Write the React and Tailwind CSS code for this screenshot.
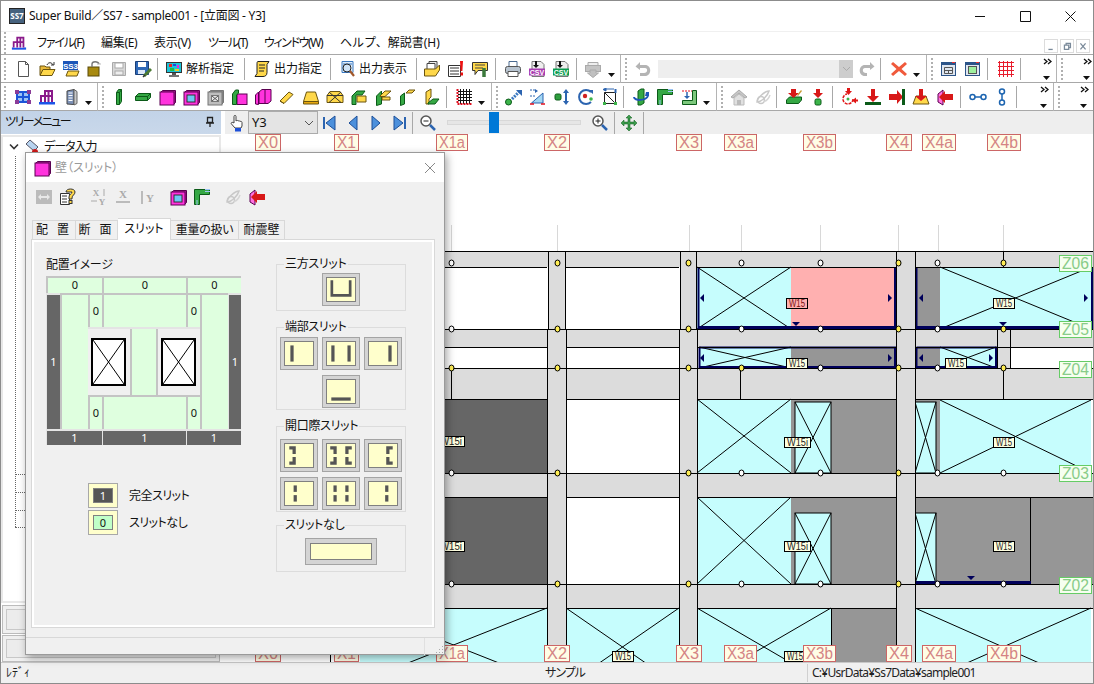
import React from 'react';

const MC = '#ff33dd';
const MD = '#5a0050';
const GR = '#35a844';
const GD = '#0b5a18';
const YL = '#ffd84a';
const YD = '#6a5410';

// toolbar icons, all on an 18x18 box
const icons = {
  new: <><path d="M4.5 1.5h7l3 3v12h-10z" fill="#fff" stroke="#555" /><path d="M11.5 1.5v3h3" fill="none" stroke="#555" /></>,
  open: <><path d="M2 15V6h5l1 1h4v3" fill="#e8b93a" stroke={YD} /><path d="M2 15.5l3-6h12l-3 6z" fill={YL} stroke={YD} /><path d="M9 5c1-3 5-3 6 0" fill="none" stroke="#333" /><path d="M13 5h3V2" fill="none" stroke="#333" /></>,
  ss3: <><path d="M4 16l2-5h11l-2 5z" fill={YL} stroke={YD} /><rect x="1" y="1" width="15" height="9" fill="#1c55b8" /><text x="8.5" y="8.5" textAnchor="middle" fontSize="8" fontWeight="700" fill="#fff" fontFamily="Liberation Sans">SS3</text></>,
  unlock: <><rect x="2" y="7" width="11" height="9" fill="#a88a10" stroke="#5a4a08" /><path d="M6 7V4c0-3 6-3 7 0" fill="none" stroke="#777" strokeWidth="1.4" /><path d="M11 4h4" stroke="#bbb" /></>,
  saveGray: <><path d="M2.5 2.5h13v13h-13z" fill="#d8d8d8" stroke="#aaa" /><rect x="5" y="3" width="8" height="5" fill="#fff" stroke="#aaa" /><rect x="5" y="11" width="8" height="4" fill="#eee" stroke="#aaa" /></>,
  saveEdit: <><path d="M1.5 1.5h13v13h-13z" fill="#2f69b8" stroke="#1a3f78" /><rect x="4" y="2" width="8" height="5" fill="#fff" /><rect x="4" y="10" width="7" height="4" fill="#dce8f8" /><path d="M10 16l7-7" stroke="#4c7a34" strokeWidth="3" /><path d="M9 17l2-2" stroke="#333" strokeWidth="1.5" /></>,
  monitor: <><rect x="1.5" y="2.5" width="15" height="10" fill="#1dc5d8" stroke="#333" /><rect x="4" y="4" width="3" height="3" fill="#e22" /><rect x="8" y="4" width="3" height="2" fill="#24d" /><rect x="12" y="5" width="2" height="3" fill="#e2d" /><rect x="5" y="8" width="4" height="3" fill="#2b4" /><rect x="10" y="9" width="4" height="2" fill="#ec2" /><path d="M7 13h4v2H7z" fill="#555" /><path d="M4 16h10" stroke="#444" strokeWidth="1.5" /></>,
  scroll: <><path d="M5 1.5h11l-2 3v8c0 3-2 4-4 4H2l2-3V4c0-1 0-2.500 1-2.500z" fill={YL} stroke="#222" /><path d="M6 5h6M6 8h6M6 11h5" stroke="#222" /></>,
  find: <><path d="M4 1.500h11v11H4z" fill="#dfeefc" stroke="#3a78c0" /><path d="M5 4h9M5 7h2M5 10h2" stroke="#3a78c0" /><circle cx="9" cy="8" r="4" fill="#cfe4f8" stroke="#222" /><path d="M12 11l4 5" stroke="#a2582a" strokeWidth="2.200" /></>,
  docs: <><path d="M6 1.500h8v8H6z" fill="#eee" stroke="#444" /><path d="M4 3.500h8v8H4z" fill="#fff" stroke="#444" /><path d="M1.500 9h11l4-4v5l-4 6h-11z" fill={YL} stroke={YD} /></>,
  alert: <><path d="M1.500 5.500h12v11h-12z" fill="#fff" stroke="#333" /><path d="M3 8h9M3 11h9M3 14h9" stroke="#333" /><path d="M13 1h3l-.6 10h-1.800z" fill="#ee1111" /><rect x="13.500" y="12.500" width="2.500" height="3" fill="#ee1111" /></>,
  note: <><path d="M1.500 2.500h15v8H7l-3 4v-4H1.500z" fill={YL} stroke="#333" /><path d="M4 5h10M4 8h8" stroke="#444" /><path d="M13 8v9" stroke="#3c7a3c" strokeWidth="3.500" /></>,
  printer: <><path d="M5 1.500h8v6H5z" fill="#fff" stroke="#4a6a90" /><rect x="1.500" y="6.500" width="15" height="7" rx="2" fill="#b8c4d0" stroke="#555" /><path d="M4 11.500h10v5H4z" fill="#fff" stroke="#555" /></>,
  csvP: <><path d="M4 1.500h9l3 3v12H4z" fill="#eee" stroke="#777" /><path d="M8 1v5" stroke="#111" strokeWidth="2" /><path d="M5 5h6l-3 3z" fill="#111" /><rect x="1" y="8.500" width="16" height="7" fill="#a83bb0" /><text x="9" y="14.500" textAnchor="middle" fontSize="7" fontWeight="700" fill="#fff" fontFamily="Liberation Sans">CSV</text></>,
  csvG: <><path d="M4 1.500h9l3 3v12H4z" fill="#eee" stroke="#777" /><path d="M8 1v5" stroke="#111" strokeWidth="2" /><path d="M5 5h6l-3 3z" fill="#111" /><rect x="1" y="8.500" width="16" height="7" fill="#0c9c50" /><text x="9" y="14.500" textAnchor="middle" fontSize="7" fontWeight="700" fill="#fff" fontFamily="Liberation Sans">CSV</text></>,
  printerGray: <><path d="M4 2.500h10v4H4z" fill="#eee" stroke="#aaa" /><rect x="1.500" y="5.500" width="15" height="6" fill="#c4c4c4" stroke="#aaa" /><path d="M6 10h6v3h2.500L9 17.500 3.500 13H6z" fill="#c0c0c0" stroke="#aaa" /></>,
  undo: <path d="M6 2L1.500 6.500 6 10V8h5c3 0 3 5-1 5H6v3h5c7 0 7-11 0-11H6z" fill="#b4b4b4" />,
  redo: <path d="M12 2l4.500 4.500L12 10V8H7c-3 0-3 5 1 5h1v3H7C0 16 0 5 7 5h5z" fill="#b4b4b4" />,
  del: <path d="M3 2l6 5 6-5 2 2-5.500 5 5.500 5-2 2-6-5-6 5-2-2 5.500-5L1 4z" fill="#f05a3c" />,
  win1: <><rect x="1.500" y="2.500" width="14" height="13" fill="#dfe6f0" stroke="#2c5488" /><path d="M2 3h13v2H2z" fill="#2c5488" /><rect x="12" y="2" width="3" height="1" fill="#e33" /><path d="M4.500 7.500h8v6h-8zM4.500 10.500h8M8.500 10.500v3" fill="none" stroke="#555" /></>,
  win2: <><rect x="1.500" y="2.500" width="14" height="13" fill="#dfe6f0" stroke="#2c5488" /><path d="M2 3h13v2H2z" fill="#2c5488" /><rect x="12" y="2" width="3" height="1" fill="#e33" /><rect x="4.500" y="6.500" width="8" height="7" fill="#9ef09e" stroke="#555" /></>,
  gridRed: <path d="M2.500 1v16M6.500 1v16M10.500 1v16M14.500 1v16M1 2.500h16M1 6.500h16M1 10.500h16M1 14.500h16" stroke="#e81c2c" fill="none" />,
  frame: <><path d="M3 4h12v10H3zM9 4v10M3 9h12" stroke="#1c55d8" strokeWidth="2" fill="#9cc4f4" /><g fill="#8a3c98"><rect x="1" y="2" width="4" height="4" /><rect x="13" y="2" width="4" height="4" /><rect x="1" y="12" width="4" height="4" /><rect x="13" y="12" width="4" height="4" /></g></>,
  bldg: <><path d="M1 14h16v2.500H1z" fill="#1c55e8" /><path d="M3 14V8h4V3h7v11" fill="#fff" stroke="#8a1a8a" strokeWidth="2" /><path d="M7 8h7M10.500 3v11M7 8v6" stroke="#8a1a8a" strokeWidth="2" /></>,
  tower: <><path d="M5 3l7-1.500v15L5 16z" fill="#7d92b8" stroke="#444" /><path d="M12 1.500l3 2v12l-3 1.500z" fill="#c8c8c8" stroke="#666" /><path d="M6.500 5h4M6.500 7.500h4M6.500 10h4M6.500 12.500h4" stroke="#fff" /></>,
  col: <><path d="M6.500 4.500l2-3h3v12l-2 3h-3z" fill={GR} stroke={GD} /><path d="M9.500 4.500v12M6.500 4.500h3l2-3" fill="none" stroke={GD} /></>,
  beam: <><path d="M1.500 8.500l3-3h12v4l-3 3h-12z" fill={GR} stroke={GD} /><path d="M1.500 8.500h12v4M13.500 8.500l3-3" fill="none" stroke={GD} /></>,
  wall: <><path d="M2.500 4.500l2-2h13v12l-2 2z" fill="#b01c98" stroke={MD} /><rect x="2" y="4" width="14" height="13" fill={MC} stroke={MD} /></>,
  wallOpen: <><path d="M2.500 4.500l2-2h13v12l-2 2z" fill="#b01c98" stroke={MD} /><rect x="2" y="4" width="14" height="13" fill={MC} stroke={MD} /><rect x="5" y="7" width="8" height="7" fill="#6cc8f4" stroke="#333" /></>,
  wallGray: <><path d="M2.500 4.500l2-2h13v12l-2 2z" fill="#888" stroke="#777" /><rect x="2" y="4" width="14" height="13" fill="#bdbdbd" stroke="#777" /><rect x="5.500" y="7.500" width="7" height="6" fill="#e8e8e8" stroke="#777" /><path d="M6 8l6 5M12 8l-6 5" stroke="#555" /></>,
  colWall: <><rect x="7" y="6" width="10" height="10.500" fill={MC} stroke={MD} /><path d="M2.500 6l3-4h3v3l-2 2v9.500h-4z" fill={GR} stroke={GD} /></>,
  wall2: <><path d="M1.500 7l3-3v12.500l-3-.500z" fill={MC} stroke={MD} /><path d="M5 4l3-2.500h9V13l-3 2.500H5z" fill={MC} stroke={MD} /><path d="M11 2v13" stroke={MD} /></>,
  brace: <><path d="M2 13l9-9 4 2.500-9 9z" fill={YL} stroke={YD} /><path d="M2 13l4 2.500" stroke={YD} /></>,
  slab: <><path d="M4.500 4h9l3 9.500h-15z" fill={YL} stroke={YD} /><path d="M1.500 13.500h15V16h-15z" fill="#e8a80e" stroke={YD} /></>,
  slabX: <><path d="M4 3.500h10l3 4v7H1v-7z" fill={YL} stroke={YD} /><path d="M1 7.500h16M3 4l12 10.500M15 4L3 14.500" stroke="#333" fill="none" /></>,
  joint1: <><path d="M2 8l5-5h8l-3 4H6v9.500H2z" fill={GR} stroke={GD} /><path d="M7 8h9v6H7z" fill={YL} stroke={YD} /></>,
  joint2: <><path d="M2.500 8l5-5v13l-5 1.500z" fill={GR} stroke={GD} /><path d="M6 8l5-5h6l-6 5.500H6zM8 9h8v3H8z" fill={YL} stroke={YD} /></>,
  joint3: <><path d="M2.500 8l4-3v11l-4 1.500z" fill={GR} stroke={GD} /><path d="M8 5l3-3h6l-3 3z" fill={YL} stroke={YD} /></>,
  joint4: <><path d="M4 4l5-3v8l-2 2v5H4z" fill={YL} stroke={YD} /><path d="M6 15l5-4h6l-4 5H6z" fill={GR} stroke={GD} /></>,
  gridDots: <><path d="M5.500 1v15M8.500 1v15M11.500 1v15M14.500 1v15M3 3.500h14M3 6.500h14M3 9.500h14M3 12.500h14" stroke="#111" /><path d="M2.500 1v15h15" fill="none" stroke="#e01020" strokeWidth="2" strokeDasharray="2 1" /></>,
  arrowNode: <><circle cx="3.500" cy="14" r="3" fill="#3cb44a" stroke={GD} /><path d="M7 11l7-7" stroke="#3a78c0" strokeWidth="3" strokeDasharray="2 1" /><path d="M11 2h6v6z" fill="#2c64b0" /></>,
  tri: <><path d="M2.500 15L14 5v10z" fill="#a4d8f4" stroke="#2c64b0" /><path d="M1 8h5M1 2h5" stroke="#2c64b0" strokeDasharray="2 1" /><path d="M6 1l3 2-3 2z" fill="#2c64b0" /><path d="M1 16h4M12 16h4" stroke="#e01020" strokeWidth="1.500" /></>,
  nodeV: <><rect x="2" y="6" width="6" height="6" rx="1.500" fill="#2e9e3e" stroke={GD} /><path d="M13 4v10" stroke="#2c64b0" strokeWidth="2" /><path d="M10 5l3-4 3 4zM10 13l3 4 3-4z" fill="#2c64b0" /></>,
  rotate: <><path d="M14 4A7 7 0 1 0 14 14" fill="none" stroke="#2c64b0" strokeWidth="2" /><path d="M11 2h5v4z" fill="#2c64b0" /><circle cx="8" cy="8" r="2.200" fill="#d02020" /><circle cx="14" cy="11" r="1.800" fill="#3cb44a" /></>,
  diag: <><path d="M3.500 4.500h11v11h-11zM3.500 4.500l11 11" fill="none" stroke="#222" /><g fill="#3cb44a"><rect x="2" y="14" width="3" height="3" /><rect x="13" y="14" width="3" height="3" /></g><path d="M4 1h9M5 0L2 1.500 5 3z" stroke="#2c64b0" fill="#2c64b0" /><path d="M14.500 1v4" stroke="#2c64b0" strokeWidth="2" /></>,
  colRot: <><path d="M6 3l3-2h3v14l-3 2H6z" fill={GR} stroke={GD} /><path d="M2 9c0 4 12 4 14-1" fill="none" stroke="#1c55b8" strokeWidth="2" /><path d="M14 4h3v4h-4z" fill="#1c55b8" /></>,
  ell: <><path d="M1.500 1.500h15v5h-10v10h-5z" fill={GR} stroke={GD} /><path d="M12 1.500h5M12 3.500h5M4 12v5" stroke="#9cc4f4" /></>,
  ell2: <><path d="M2.500 12.500h10v-10h4v14h-14z" fill="#7cc87c" stroke={GD} /><path d="M2 3h10" stroke="#e01020" strokeDasharray="2 1" /><path d="M7 4v4" stroke="#2c64b0" strokeWidth="1.500" /><path d="M4 8h6l-3 3z" fill="#2c64b0" /></>,
  house: <><path d="M1 9l8-7 8 7-2 1-6-5-6 5z" fill="#c8c8c8" stroke="#aaa" /><path d="M4 10l5-4 5 4v7H4z" fill="#e0e0e0" stroke="#bbb" /><rect x="7" y="12" width="4" height="5" fill="#bbb" /></>,
  link: <><path d="M3 14c0-4 8-11 12-11-1 4-7 11-12 11z" fill="none" stroke="#c8c8c8" strokeWidth="1.500" /><circle cx="7" cy="12" r="3.500" fill="none" stroke="#c8c8c8" strokeWidth="1.500" /><path d="M10 13c2 1 5-3 6-6" fill="none" stroke="#d4d4d4" strokeWidth="1.500" /></>,
  downBeam: <><path d="M1.500 12l3-3h12v3l-3 3.500h-12z" fill={GR} stroke={GD} /><path d="M6 1h5v4h3l-5.500 5L3 5h3z" fill="#d81818" /><path d="M12 7l4-5 1 1-4 5z" fill="#c89a30" /></>,
  downNode: <><path d="M7 1h4v4h3l-5 5-5-5h3z" fill="#d81818" /><rect x="6" y="11" width="6" height="6" rx="1.500" fill="#3cb44a" stroke={GD} /></>,
  redLoop: <><path d="M13 11a5 5 0 1 1-6-5" fill="none" stroke="#e01818" strokeWidth="1.500" strokeDasharray="3 1" /><path d="M7 0h3v3h2l-3.500 4L5 3h2z" fill="#e01818" /><path d="M12 12.500l4-3v2h2v2h-2v2z" fill="#e01818" /><circle cx="8" cy="11" r="1.500" fill="#3cb44a" /></>,
  downBar: <><path d="M7 1h4v7h4l-6 6-6-6h4z" fill="#d81818" /><rect x="1" y="14" width="16" height="3" fill={GD} /></>,
  rightBar: <><path d="M1 6h8V2l6 7-6 7v-4H1z" fill="#d81818" /><rect x="14" y="1" width="3" height="16" fill={GD} /></>,
  downSlab: <><path d="M4 8h10l3 8H1z" fill={YL} stroke={YD} /><path d="M7 1h4v7h4l-6 5-6-5h4z" fill="#d81818" /></>,
  leftWall: <><path d="M2 6l5-4v15l-5-3z" fill="#ff70e0" stroke={MD} /><path d="M17 6H9V3L3 9l6 6v-3h8z" fill="#d81818" /></>,
  linkH: <><circle cx="3.500" cy="9" r="2.500" fill="#fff" stroke="#1c64b0" strokeWidth="1.500" /><circle cx="14.500" cy="9" r="2.500" fill="#fff" stroke="#1c64b0" strokeWidth="1.500" /><path d="M6 9h6" stroke="#1c64b0" strokeWidth="1.500" /></>,
  linkV: <><circle cx="9" cy="3.500" r="2.500" fill="#fff" stroke="#1c64b0" strokeWidth="1.500" /><circle cx="9" cy="14.500" r="2.500" fill="#fff" stroke="#1c64b0" strokeWidth="1.500" /><path d="M9 6v6" stroke="#1c64b0" strokeWidth="1.500" /></>,
  hand: <><path d="M6 9V2.500c0-1.500 2-1.500 2 0V7c1-1 2-.5 2 0 1-.5 2 0 2 .5 1-.5 2 0 2 1V12l-1 2H7L3.500 10c-1-1 .5-2.500 2.500-1z" fill="#fff" stroke="#444" /><rect x="7" y="14" width="6" height="3.500" fill="#1c4fd8" /></>,
  first: <><rect x="2" y="3" width="2" height="12" fill="#2c64b0" /><path d="M14 2v14L5 9z" fill="#4c90dc" stroke="#1c4f98" /></>,
  prev: <path d="M13 2v14L5 9z" fill="#4c90dc" stroke="#1c4f98" />,
  next: <path d="M5 2v14l8-7z" fill="#4c90dc" stroke="#1c4f98" />,
  last: <><rect x="14" y="3" width="2" height="12" fill="#2c64b0" /><path d="M4 2v14l9-7z" fill="#4c90dc" stroke="#1c4f98" /></>,
  zoomOut: <><circle cx="7" cy="7" r="5" fill="#fff" stroke="#555" strokeWidth="1.500" /><path d="M4.500 7h5" stroke="#222" /><path d="M11 11l5 5" stroke="#2c64b0" strokeWidth="2.500" /></>,
  zoomIn: <><circle cx="7" cy="7" r="5" fill="#fff" stroke="#555" strokeWidth="1.500" /><path d="M4.500 7h5M7 4.500v5" stroke="#222" /><path d="M11 11l5 5" stroke="#2c64b0" strokeWidth="2.500" /></>,
  move: <path d="M9 1l3 3h-2v4h4V6l3 3-3 3v-2h-4v4h2l-3 3-3-3h2v-4H4v2L1 9l3-3v2h4V4H6z" fill="#3c9c4c" stroke={GD} strokeWidth=".5" />,
  arrows: <><rect x="1" y="2" width="16" height="14" fill="#bbb" /><path d="M3 9l3-3v2h6V6l3 3-3 3v-2H6v2z" fill="#e8e8e8" /></>,
  help: <><path d="M1.500 5.500h9v11h-9z" fill="#fff" stroke="#333" /><path d="M3 8h5M3 11h5M3 14h5" stroke="#333" /><path d="M7 4c0-4 9-4 9 0 0 3-3 3-3 6v1h-3v-2c0-3 3-3 3-5h-3z" fill={YL} stroke="#333" /><rect x="10" y="12.500" width="3" height="3" fill={YL} stroke="#333" /></>,
  xy: <><text x="6" y="8" textAnchor="middle" fontSize="9" fontWeight="700" fill="#aaa" fontFamily="Liberation Serif">X</text><text x="12" y="17" textAnchor="middle" fontSize="9" fontWeight="700" fill="#aaa" fontFamily="Liberation Serif">Y</text><path d="M14 1v7M1 13h6" stroke="#aaa" /></>,
  x: <><text x="9" y="10" textAnchor="middle" fontSize="11" fontWeight="700" fill="#aaa" fontFamily="Liberation Serif">X</text><path d="M2 14h14" stroke="#aaa" strokeWidth="1.500" /></>,
  y: <><text x="12" y="14" textAnchor="middle" fontSize="11" fontWeight="700" fill="#aaa" fontFamily="Liberation Serif">Y</text><path d="M4 16V3" stroke="#aaa" strokeWidth="1.500" /></>,
};

const Icon = ({ name, size = 18 }) => (
  <svg width={size} height={size} viewBox="0 0 18 18" className="block shrink-0">{icons[name]}</svg>
);

const Slot = ({ name, w = 'w-[24px]' }) => (
  <div className={`${w} h-[24px] shrink-0 flex items-center justify-center`}><Icon name={name} /></div>
);

const Slots = ({ names, className = '' }) => (
  <div className={`flex ${className}`}>{names.map((n, i) => <Slot key={i} name={n} />)}</div>
);

const Grip = () => (
  <div className="w-[3px] h-[22px] ml-[4px] mr-[3px] shrink-0 border-l-2 border-dotted border-[#b0b0b0]" />
);
const Sep = ({ className = '' }) => <div className={`w-px h-[22px] bg-[#a8a8a8] shrink-0 ${className}`} />;
const Edge = ({ className = '' }) => <div className={`w-px h-[28px] bg-[#b4b4b4] shrink-0 ${className}`} />;
const Drop = ({ className = '' }) => (
  <svg width="8" height="4" viewBox="0 0 8 4" className={`shrink-0 self-end mb-[5px] ${className}`}><path d="M0 0h7L3.500 4z" fill="#111" /></svg>
);
const Chevrons = ({ className = '' }) => (
  <div className={`w-[18px] shrink-0 flex flex-col items-center justify-between h-[22px] ${className}`}>
    <svg width="9" height="7" viewBox="0 0 9 7"><path d="M1 1l3 2.500L1 6M5 1l3 2.500L5 6" fill="none" stroke="#111" strokeWidth="1.300" /></svg>
    <svg width="8" height="4" viewBox="0 0 8 4"><path d="M0 0h7L3.500 4z" fill="#111" /></svg>
  </div>
);

const TextButton = ({ icon, label, w }) => (
  <div className={`${w} flex items-center shrink-0 pl-[7px] gap-[3px]`}>
    <Icon name={icon} />
    <span className="text-[12px] text-[#111]">{label}</span>
  </div>
);

const ToolBarOne = () => (
  <div className="h-[28px] -ml-[1px] flex items-center border-b border-[#a8a8a8]">
    <Grip />
    <Slots names={['new', 'open', 'ss3', 'unlock', 'saveGray', 'saveEdit']} className="ml-[1px]" />
    <Sep className="ml-[2px]" />
    <TextButton icon="monitor" label="解析指定" w="w-[85px]" />
    <Sep className="mx-[1px]" />
    <TextButton icon="scroll" label="出力指定" w="w-[84px]" />
    <Sep />
    <TextButton icon="find" label="出力表示" w="w-[85px]" />
    <Sep className="mr-[3px]" />
    <Slots names={['docs', 'alert', 'note']} />
    <Sep className="ml-[3px] mr-[5px]" />
    <Slots names={['printer', 'csvP', 'csvG']} />
    <Sep className="ml-[3px] mr-[4px]" />
    <Slot name="printerGray" />
    <Drop className="ml-[3px]" />
    <Edge className="ml-[4px]" />
    <Grip />
    <Slot name="undo" />
    <div className="w-[195px] h-[18px] ml-[3px] bg-[#eeeeee] flex justify-end shrink-0">
      <div className="w-[14px] h-[18px] bg-[#cdcdcd] flex items-center justify-center">
        <svg width="9" height="6" viewBox="0 0 9 6"><path d="M1 1l3.500 3.500L8 1" fill="none" stroke="#aaa" /></svg>
      </div>
    </div>
    <Slot name="redo" w="w-[24px] ml-[2px]" />
    <Sep className="ml-[1px] mr-[6px]" />
    <Slot name="del" />
    <Drop className="ml-[2px]" />
    <Edge className="ml-[5px]" />
    <Grip />
    <Slots names={['win1', 'win2']} />
    <Sep className="ml-[2px] mr-[6px]" />
    <Slot name="gridRed" />
    <Sep className="ml-[2px]" />
    <Chevrons className="ml-[17px]" />
    <Edge />
    <Grip />
    <Chevrons className="ml-[11px]" />
  </div>
);

const ToolBarTwo = () => (
  <div className="h-[28px] -ml-[1px] flex items-center border-b border-[#a8a8a8]">
    <Grip />
    <Slots names={['frame', 'bldg', 'tower']} className="ml-[1px]" />
    <Drop className="ml-[2px]" />
    <Edge className="ml-[4px]" />
    <Grip />
    <Slots names={['col', 'beam', 'wall', 'wallOpen', 'wallGray', 'colWall', 'wall2', 'brace', 'slab', 'slabX', 'joint1', 'joint2', 'joint3', 'joint4']} className="-ml-[1px]" />
    <Sep className="ml-[3px] mr-[5px]" />
    <Slot name="gridDots" />
    <Drop className="ml-[2px]" />
    <Edge className="ml-[5px]" />
    <Grip />
    <Slots names={['arrowNode', 'tri', 'nodeV', 'rotate', 'diag']} />
    <Sep className="ml-[1px] mr-[5px]" />
    <Slots names={['colRot', 'ell', 'ell2']} />
    <Drop className="ml-[2px]" />
    <Edge className="ml-[5px]" />
    <Grip />
    <Slots names={['house', 'link']} />
    <Sep className="ml-[1px] mr-[5px]" />
    <Slots names={['downBeam', 'downNode']} />
    <Sep className="ml-[2px] mr-[4px]" />
    <Slots names={['redLoop', 'downBar', 'rightBar', 'downSlab', 'leftWall']} />
    <Sep className="ml-[3px] mr-[5px]" />
    <Slots names={['linkH', 'linkV']} />
    <Sep className="ml-[2px]" />
    <Chevrons className="ml-[18px]" />
    <Edge />
    <Grip />
    <Chevrons className="ml-[11px]" />
  </div>
);

const ViewBar = () => (
  <div className="h-[23px] ml-[4px] bg-[#eeeeee] flex items-center shrink-0">
    <Slot name="hand" w="w-[23px]" />
    <div className="w-[70px] h-[23px] shrink-0 bg-[#e4e4e4] border border-[#ababab] flex items-center justify-between px-[3px] text-[13px] text-[#111]">
      <span>Y3</span>
      <svg width="10" height="6" viewBox="0 0 10 6"><path d="M1 1l4 4 4-4" fill="none" stroke="#555" /></svg>
    </div>
    {['first', 'prev', 'next', 'last'].map((n) => <Slot key={n} name={n} w="w-[23px]" />)}
    <Sep className="ml-[2px]" />
    <Slot name="zoomOut" w="w-[24px] ml-[3px]" />
    <div className="relative w-[134px] h-[5px] ml-[7px] shrink-0 bg-[#e6e6e6] border border-[#d8d8d8]">
      <div className="absolute left-[41px] -top-[9px] w-[10px] h-[21px] bg-[#0078d7]" />
    </div>
    <Slot name="zoomIn" w="w-[24px] ml-[7px]" />
    <Sep className="ml-[2px]" />
    <Slot name="move" w="w-[24px] ml-[2px]" />
    <Sep className="ml-[2px]" />
  </div>
);

const treeRows = ['top-[337px]', 'top-[355px]', 'top-[373px]', 'top-[390px]'];

const Sidebar = () => (
  <div className="w-[220px] shrink-0 flex flex-col">
    <div className="h-[23px] bg-gradient-to-b from-[#c2d3e8] to-[#c9d8ea] flex items-center justify-between pl-[4px] pr-[5px]">
      <span className="text-[12px] text-[#111] [font-feature-settings:'palt'] tracking-[-1.500px]">ツリーメニュー</span>
      <svg width="12" height="12" viewBox="0 0 12 12"><path d="M3.500 1.500h5v5h-5zM2 7h8M6 7v4" fill="none" stroke="#222" strokeWidth="1.300" /></svg>
    </div>
    <div className="relative h-[469px] border-2 border-[#e8e8e8] mt-[1px]">
      <div className="flex items-center pl-[5px] h-[20px] gap-[1px] text-[12px] text-[#111]">
        <svg width="12" height="8" viewBox="0 0 12 8"><path d="M2 1.500l4 4 4-4" fill="none" stroke="#333" strokeWidth="1.600" /></svg>
        <div className="w-[16px] h-[16px] ml-[3px] relative">
          <svg width="16" height="16" viewBox="0 0 16 16"><path d="M2 5l4-4 8 7-4 4z" fill="#b8d4f0" stroke="#556" /><circle cx="11" cy="13" r="3" fill="#d01818" /></svg>
        </div>
        <span className="ml-[3px] tracking-[-1px] [font-feature-settings:'palt']">データ入力</span>
      </div>
      <div className="absolute left-[12px] top-[19px] h-[371px] border-l border-dotted border-[#666]" />
      {treeRows.map((t) => <div key={t} className={`absolute left-[12px] w-[20px] border-t border-dotted border-[#666] ${t}`} />)}
    </div>
    <div className="h-[29px] mt-[2px] mx-[1px] border border-[#bcbcbc] p-[3px] bg-[#f0f0f0]"><div className="h-full border border-[#c8c8c8] bg-[#ececec]" /></div>
    <div className="h-[27px] mt-[1px] mx-[1px] border border-[#bcbcbc] p-[3px] bg-[#f0f0f0]"><div className="h-full border border-[#c8c8c8] bg-[#ececec]" /></div>
  </div>
);

// elevation drawing, written in page coordinates through the viewBox
const Cell = ({ x, y, w, h, fill, cross, stroke = '#000' }) => (
  <g>
    <rect x={x} y={y} width={w} height={h} fill={fill} stroke={stroke} />
    {cross && <path d={`M${x} ${y}L${x + w} ${y + h}M${x + w} ${y}L${x} ${y + h}`} stroke="#000" fill="none" />}
  </g>
);

const CY = '#c6fdfd';
const G1 = '#969696';
const G2 = '#666666';
const BEAM = '#dcdcdc';
const NAVY = '#00005a';

const Tag = ({ x, y, t = 'W15', w = 21, fill = '#ffffe0', color = '#222' }) => (
  <g>
    <rect x={x + 0.5} y={y + 0.5} width={w} height={10} fill={fill} stroke="#000" />
    <text x={x + w / 2 + 0.5} y={y + 9} textAnchor="middle" fontSize="10" fill={color} fontFamily="Liberation Sans" textLength={w - 5} lengthAdjust="spacingAndGlyphs">{t}</text>
  </g>
);

const Label = ({ x, y, w, t, z }) => (
  <g>
    <rect x={x + 0.5} y={y + 0.5} width={w} height={16} fill={z ? '#f6fff0' : '#fffde6'} stroke={z ? '#66cc66' : '#cc6666'} />
    <text x={x + w / 2 + 0.5} y={y + 14} textAnchor="middle" fontSize="16" fill={z ? '#88cc88' : '#d48484'} fontFamily="Liberation Sans" textLength={w - 5} lengthAdjust="spacingAndGlyphs">{t}</text>
  </g>
);

const Tri = ({ x, y, d }) => {
  const p = d === 'l' ? `M${x + 2} ${y - 4}L${x - 2} ${y}L${x + 2} ${y + 4}z`
    : d === 'r' ? `M${x - 2} ${y - 4}L${x + 2} ${y}L${x - 2} ${y + 4}z`
      : `M${x - 4} ${y - 2}L${x + 4} ${y - 2}L${x} ${y + 2}z`;
  return <path d={p} fill={NAVY} />;
};

const xLabels = [[255, 25, 'X0'], [334, 24, 'X1'], [436, 31, 'X1a'], [544, 25, 'X2'], [676, 25, 'X3'], [724, 32, 'X3a'], [803, 32, 'X3b'], [886, 25, 'X4'], [922, 33, 'X4a'], [987, 33, 'X4b']];
const zLabels = [[255, 'Z06'], [321, 'Z05'], [361, 'Z04'], [465, 'Z03'], [577, 'Z02']];
const ticks = [451, 557, 689, 741, 820, 898, 938, 1003];
const nodeX = [451, 557, 688, 741, 820, 898, 937, 1003];
const nodeRows = [
  [263, [0, 1, 1, 0, 0, 1, 0, 1]],
  [329, [0, 1, 1, 0, 0, 1, 0, 1]],
  [368, [1, 1, 1, 1, 0, 1, 0, 1]],
  [473, [0, 1, 1, 0, 0, 1, 0, 0]],
  [584, [0, 1, 1, 0, 0, 1, 0, 0]],
];
const spans = [[221, 547], [566, 679], [697, 896], [915, 1094]];

const Drawing = () => (
  <svg width="873" height="528" viewBox="221 134 873 528" className="block">
    <rect x="221" y="134" width="873" height="528" fill="#fff" />
    {ticks.map((x) => <path key={x} d={`M${x + 0.5} 225V251`} stroke="#d8d8d8" />)}

    {/* beams */}
    {[[251, 16], [329, 18], [368, 31], [473, 24], [584, 24]].map(([y, h]) => (
      <rect key={y} x="221" y={y} width="873" height={h} fill={BEAM} />
    ))}

    {/* Z05-Z06 */}
    <Cell x={697} y={267} w={94} h={62} fill={CY} cross stroke="none" />
    <rect x="791" y="267" width="104" height="62" fill="#ffb0b0" />
    <rect x="916" y="267" width="24" height="62" fill={G1} />
    <Cell x={940} y={267} w={151} h={62} fill={CY} cross stroke="none" />
    <path d="M698.500 268V328H895V268M916.500 268V328H1092V268" fill="none" stroke={NAVY} strokeWidth="2" />
    <path d="M698 327.500H895M916 327.500H1092" stroke={NAVY} strokeWidth="3" />

    {/* Z04-Z05 */}
    <rect x="445" y="347" width="102" height="21" fill="#fff" />
    <rect x="1010" y="347" width="84" height="21" fill="#fff" />
    <rect x="997" y="329" width="13" height="39" fill={BEAM} />
    <Cell x={699} y={347} w={92} h={21} fill={CY} cross stroke="none" />
    <rect x="791" y="347" width="103" height="21" fill={G1} />
    <rect x="916" y="347" width="24" height="21" fill={G1} />
    <Cell x={940} y={347} w={56} h={21} fill={CY} cross stroke="none" />
    <path d="M699.500 347.500V367H895V347.500H699.500M916.500 347.500V367H996V347.500H916.500" fill="none" stroke={NAVY} strokeWidth="2" />

    {/* Z03-Z04 */}
    <rect x="221" y="399" width="326" height="74" fill={G2} />
    <Cell x={697} y={399} w={94} h={74} fill={CY} cross stroke="none" />
    <rect x="791" y="399" width="105" height="74" fill={G1} />
    <Cell x={795} y={402} w={36} h={71} fill={CY} cross />
    <rect x="915" y="399" width="25" height="74" fill={G1} />
    <Cell x={915} y={402} w={21} h={71} fill={CY} cross />
    <Cell x={940} y={400} w={151} h={73} fill={CY} cross stroke="none" />

    {/* Z02-Z03 */}
    <rect x="221" y="497" width="326" height="87" fill={G2} />
    <Cell x={697} y={497} w={94} h={87} fill={CY} cross stroke="none" />
    <rect x="791" y="497" width="105" height="87" fill={G1} />
    <Cell x={795} y={513} w={36} h={71} fill={CY} cross />
    <rect x="915" y="497" width="179" height="87" fill={G1} />
    <Cell x={915} y={513} w={21} h={71} fill={CY} cross />
    <path d="M1030.500 497V581" stroke="#000" />
    <path d="M915 582.500H1031" stroke={NAVY} strokeWidth="3" />

    {/* below Z02 */}
    <Cell x={360} y={608} w={187} h={74} fill={CY} cross stroke="none" />
    <Cell x={566} y={608} w={113} h={78} fill={CY} cross stroke="none" />
    <Cell x={697} y={608} w={134} h={78} fill={CY} cross stroke="none" />
    <rect x="831" y="608" width="65" height="54" fill={G1} />
    <Cell x={915} y={608} w={176} h={78} fill={CY} cross stroke="none" />
    <path d="M330.500 640V662M831.500 608V662" stroke="#000" />

    {/* columns over the beams */}
    {[[547, 19], [679, 18], [896, 19]].map(([x, w]) => (
      <rect key={x} x={x} y="329" width={w} height="333" fill={BEAM} />
    ))}
    <rect x="548" y="251" width="17" height="78" fill={BEAM} />
    <rect x="680" y="251" width="16" height="78" fill={BEAM} />
    <rect x="896" y="251" width="19" height="78" fill={BEAM} />

    {/* outlines */}
    {[251, 329, 368, 473, 584].map((y) => <path key={y} d={`M221 ${y + 0.5}H1094`} stroke="#000" />)}
    {[267, 347, 399, 497, 608].map((y) => spans.map(([a, b]) => (
      <path key={`${y}-${a}`} d={`M${a} ${y + 0.5}H${b}`} stroke="#000" />
    )))}
    {[547, 566, 679, 697, 896, 915].map((x) => <path key={x} d={`M${x + 0.5} 329V662`} stroke="#000" />)}
    {[548, 565, 680, 696, 896, 915].map((x) => <path key={x} d={`M${x + 0.5} 251V329`} stroke="#000" />)}
    <path d="M451.500 368V399M740.500 368V399M1003.500 368V399M1003.500 251V267M997.500 329V368M1010.500 329V368" stroke="#000" />

    {/* slit markers */}
    <Tri x={702} y={298} d="l" /><Tri x={890} y={298} d="r" /><Tri x={796} y={324} d="d" />
    <Tri x={921} y={298} d="l" /><Tri x={1086} y={298} d="r" /><Tri x={1003} y={324} d="d" />
    <Tri x={702} y={358} d="l" /><Tri x={890} y={358} d="r" />
    <Tri x={921} y={358} d="l" /><Tri x={991} y={358} d="r" />
    <Tri x={971} y={578} d="d" />

    {/* nodes */}
    {nodeRows.map(([y, kinds]) => nodeX.map((x, i) => (
      <ellipse key={`${y}-${x}`} cx={x + 0.5} cy={y} rx="2.500" ry="3" fill={kinds[i] ? '#ffee55' : '#fff'} stroke="#000" />
    )))}

    {/* member tags */}
    <Tag x={786} y={298} fill="#ffb0b0" color="#7a1010" />
    <Tag x={993} y={298} />
    <Tag x={786} y={358} />
    <Tag x={945} y={358} />
    <Tag x={437} y={436} w={27} t="W15i" />
    <Tag x={784} y={437} w={26} t="W15i" />
    <Tag x={993} y={437} />
    <Tag x={437} y={541} w={27} t="W15i" />
    <Tag x={784} y={541} w={26} t="W15i" />
    <Tag x={993} y={541} />
    <Tag x={612} y={651} />
    <Tag x={784} y={651} />

    {/* grid labels */}
    {xLabels.map(([x, w, t]) => <Label key={`top-${t}`} x={x} y={134} w={w} t={t} />)}
    {xLabels.map(([x, w, t]) => <Label key={`bot-${t}`} x={x} y={645} w={w} t={t} />)}
    {zLabels.map(([y, t]) => <Label key={t} x={1059} y={y} w={32} t={t} z />)}
  </svg>
);

// dialog parts
const SlitButton = ({ children, wide }) => (
  <div className={`${wide ? 'w-[72px] h-[27px] p-[4px]' : 'w-[38px] h-[33px] p-[3px]'} bg-[#d4d4d4] border border-[#a4a4a4] shrink-0`}>
    <div className="w-full h-full bg-[#ffffcc] border border-[#808080]">
      {children && <svg width="100%" height="100%" viewBox="0 0 26 21" className="block">{children}</svg>}
    </div>
  </div>
);

const Group = ({ title, className, children }) => (
  <div className={`relative w-[130px] border border-[#dcdcdc] ${className}`}>
    <span className="absolute left-[7px] -top-[9px] px-[1px] bg-[#f0f0f0] text-[12px] leading-[16px] text-[#111] [font-feature-settings:'palt'] tracking-[-0.300px]">{title}</span>
    {children}
  </div>
);

const D = '#555555';
const GreenCell = ({ children, className = '' }) => (
  <div className={`bg-[#dfffdf] flex items-center justify-center border-l-2 border-t-2 border-[#c4c4c4] text-[11px] text-[#111] ${className}`}>{children}</div>
);
const DarkCell = ({ className = '' }) => (
  <div className={`bg-[#666666] flex items-center justify-center border-l border-t-2 border-[#e4e4e4] text-[11px] text-white ${className}`}>1</div>
);
const Opening = () => (
  <div className="w-[35px] h-[48px] bg-white border-2 border-black">
    <svg width="100%" height="100%" viewBox="0 0 31 44" preserveAspectRatio="none" className="block"><path d="M0 0L31 44M31 0L0 44" stroke="#000" /></svg>
  </div>
);

const SlitImage = () => (
  <div className="grid grid-cols-[14px_28px_14px_84px_14px_28px_13px] grid-rows-[17px_34px_68px_34px_16px] w-[195px] h-[169px] mt-[3px]">
    <GreenCell className="col-span-3">0</GreenCell>
    <GreenCell>0</GreenCell>
    <GreenCell className="col-span-3">0</GreenCell>
    <DarkCell className="row-span-3" />
    <GreenCell className="row-span-3" />
    <GreenCell>0</GreenCell>
    <GreenCell />
    <GreenCell>0</GreenCell>
    <GreenCell className="row-span-3" />
    <DarkCell className="row-span-3" />
    <div className="col-span-3 flex border-t-2 border-[#e4e4e4]">
      <div className="w-[42px] flex items-center justify-end pr-[4px]"><Opening /></div>
      <div className="w-[28px] bg-[#dfffdf] border-x-2 border-[#c4c4c4]" />
      <div className="w-[42px] flex items-center pl-[3px]"><Opening /></div>
    </div>
    <GreenCell>0</GreenCell>
    <GreenCell />
    <GreenCell>0</GreenCell>
    <DarkCell className="col-span-3" />
    <DarkCell />
    <DarkCell className="col-span-3" />
  </div>
);

const Legend = ({ bg, color, n, label }) => (
  <div className="flex items-center">
    <div className="w-[30px] h-[25px] bg-[#ffffcc] border border-[#a8a8a8] flex items-center justify-center">
      <div className={`w-[20px] h-[15px] border border-[#808080] ${bg} ${color} text-[11px] leading-[13px] text-center`}>{n}</div>
    </div>
    <span className="ml-[11px] text-[12px] text-[#111] [font-feature-settings:'palt'] tracking-[-0.500px]">{label}</span>
  </div>
);

const Dialog = () => (
  <div className="absolute left-[24px] top-[152px] w-[420px] h-[503px] bg-[#f0f0f0] border border-[#9a9a9a] shadow-[2px_3px_8px_rgba(0,0,0,0.35)] flex flex-col">
    <div className="h-[29px] bg-white flex items-center pl-[7px] pr-[8px] shrink-0">
      <Icon name="wall" />
      <span className="ml-[4px] text-[12px] text-[#9a9a9a] flex-1 [font-feature-settings:'palt']">壁（スリット）</span>
      <svg width="12" height="12" viewBox="0 0 12 12"><path d="M1 1l10 10M11 1L1 11" stroke="#888" /></svg>
    </div>
    <div className="h-[30px] flex items-center shrink-0 pl-[6px]">
      <Slot name="arrows" />
      <Slot name="help" />
      <Slot name="xy" w="w-[24px] ml-[7px]" />
      <Slot name="x" />
      <Slot name="y" />
      <Slot name="wallOpen" w="w-[24px] ml-[7px]" />
      <Slot name="ell" />
      <Slot name="link" w="w-[24px] ml-[7px]" />
      <Slot name="leftWall" />
    </div>
    <div className="flex items-end h-[27px] pl-[6px] shrink-0 text-[12px] text-[#111]">
      <div className="w-[44px] h-[19px] border border-b-0 border-[#d8d8d8] text-center leading-[18px] tracking-[3px]">配 置</div>
      <div className="w-[42px] h-[19px] border border-b-0 border-l-0 border-[#d8d8d8] text-center leading-[18px] tracking-[3px]">断 面</div>
      <div className="w-[53px] h-[22px] bg-white border border-b-0 border-l-0 border-[#d8d8d8] text-center leading-[20px] relative top-[1px] z-10 [font-feature-settings:'palt']">スリット</div>
      <div className="w-[68px] h-[19px] border border-b-0 border-l-0 border-[#d8d8d8] text-center leading-[18px] [font-feature-settings:'palt'] tracking-[-0.300px]">重量の扱い</div>
      <div className="w-[46px] h-[19px] border border-b-0 border-l-0 border-[#d8d8d8] text-center leading-[18px]">耐震壁</div>
    </div>
    <div className="ml-[5px] mr-[9px] h-[389px] border border-[#d8d8d8] bg-white p-[2px] shrink-0">
      <div className="h-full bg-[#f0f0f0] flex pl-[12px] pt-[15px]">
        <div className="w-[195px] shrink-0">
          <div className="text-[12px] leading-[16px] text-[#111] [font-feature-settings:'palt'] tracking-[-0.300px]">配置イメージ</div>
          <SlitImage />
          <div className="mt-[38px] ml-[42px] flex flex-col gap-[2px]">
            <Legend bg="bg-[#555555]" color="text-white" n="1" label="完全スリット" />
            <Legend bg="bg-[#c0ffc8]" color="text-[#111]" n="0" label="スリットなし" />
          </div>
        </div>
        <div className="ml-[35px] pt-[7px] flex flex-col">
          <Group title="三方スリット" className="h-[47px] flex justify-center pt-[8px]">
            <SlitButton><path d="M4.500 2v14h17V2" fill="none" stroke={D} strokeWidth="2.500" /></SlitButton>
          </Group>
          <Group title="端部スリット" className="h-[83px] mt-[16px] pt-[9px] flex flex-wrap justify-center gap-x-[4px] gap-y-[4px]">
            <SlitButton><rect x="5" y="3" width="3" height="15" fill={D} /></SlitButton>
            <SlitButton><rect x="4" y="3" width="3" height="15" fill={D} /><rect x="19" y="3" width="3" height="15" fill={D} /></SlitButton>
            <SlitButton><rect x="18" y="3" width="3" height="15" fill={D} /></SlitButton>
            <SlitButton><rect x="4" y="16" width="18" height="3" fill={D} /></SlitButton>
          </Group>
          <Group title="開口際スリット" className="h-[86px] mt-[16px] pt-[12px] flex flex-wrap justify-center gap-x-[4px] gap-y-[3px]">
            <SlitButton><path d="M4 2h6v7H7V5H4zM4 19h6v-7H7v4H4z" fill={D} /></SlitButton>
            <SlitButton><path d="M3 2h6v7H6V5H3zM3 19h6v-7H6v4H3zM23 2h-6v7h3V5h3zM23 19h-6v-7h3v4h3z" fill={D} /></SlitButton>
            <SlitButton><path d="M22 2h-6v7h3V5h3zM22 19h-6v-7h3v4h3z" fill={D} /></SlitButton>
            <SlitButton><rect x="8" y="3" width="3" height="6" fill={D} /><rect x="8" y="12" width="3" height="6" fill={D} /></SlitButton>
            <SlitButton><rect x="6" y="3" width="3" height="6" fill={D} /><rect x="6" y="12" width="3" height="6" fill={D} /><rect x="17" y="3" width="3" height="6" fill={D} /><rect x="17" y="12" width="3" height="6" fill={D} /></SlitButton>
            <SlitButton><rect x="15" y="3" width="3" height="6" fill={D} /><rect x="15" y="12" width="3" height="6" fill={D} /></SlitButton>
          </Group>
          <Group title="スリットなし" className="h-[47px] mt-[13px] flex justify-center pt-[12px]">
            <SlitButton wide />
          </Group>
        </div>
      </div>
    </div>
    <div className="mt-[9px] flex-1 border-t border-[#d8d8d8] flex justify-end items-end">
      <div className="w-[20px] h-[17px] border-l border-[#e0e0e0] flex items-end justify-end">
        <svg width="10" height="10" viewBox="0 0 10 10"><path d="M8 1h1v1H8zM5 4h1v1H5zM8 4h1v1H8zM2 7h1v1H2zM5 7h1v1H5zM8 7h1v1H8z" fill="#aaa" /></svg>
      </div>
    </div>
  </div>
);

const menus = [
  ['ファイル(F)', 'w-[64px] tracking-[-1.200px]'],
  ['編集(E)', 'w-[53px] tracking-[-0.300px]'],
  ['表示(V)', 'w-[54px] tracking-[-0.300px]'],
  ['ツール(T)', 'w-[56px] tracking-[-1.500px]'],
  ['ウィンドウ(W)', 'w-[76px] tracking-[-1.400px]'],
];

export default function App() {
  return (
    <div className="relative w-[1094px] h-[684px] overflow-hidden bg-white flex flex-col border-x border-[#8c8c8c] font-['Noto_Sans','Noto_Sans_CJK_JP',sans-serif]">
      <div className="h-[32px] shrink-0 border-t border-[#8c8c8c] flex items-center pl-[8px] border-b-[#f0f0f0] border-b">
        <div className="w-[16px] h-[16px] bg-[#46627e] border border-[#222] text-[8px] font-bold leading-[14px] text-white text-center">SS7</div>
        <span className="ml-[4px] text-[12px] text-[#111] flex-1 [font-feature-settings:'palt'] tracking-[-0.250px]">Super Build／SS7 - sample001 - [立面図 - Y3]</span>
        <div className="w-[45px] flex justify-center"><svg width="11" height="11" viewBox="0 0 11 11"><path d="M0 5.500h10" stroke="#111" /></svg></div>
        <div className="w-[45px] flex justify-center"><svg width="11" height="11" viewBox="0 0 11 11"><path d="M.5.500h10v10H.5z" fill="none" stroke="#111" /></svg></div>
        <div className="w-[45px] flex justify-center"><svg width="11" height="11" viewBox="0 0 11 11"><path d="M.5.500l10 10M10.500.500l-10 10" stroke="#111" /></svg></div>
      </div>
      <div className="h-[23px] shrink-0 -ml-[1px] flex items-center border-b border-[#a8a8a8] text-[12px] text-[#111]">
        <Grip />
        <div className="ml-[1px] w-[26px]"><Icon name="bldg" size={16} /></div>
        {menus.map(([t, c]) => <span key={t} className={`[font-feature-settings:'palt'] ${c}`}>{t}</span>)}
        <span className="flex-1">ヘルプ、解説書(H)</span>
        <div className="flex gap-[2px] self-end mb-[1px] mr-[3px]">
          {['M4 10h5', 'M4 5h5v5H4zM6 5V3h5v5H9', 'M4 3l6 7M10 3l-6 7'].map((d) => (
            <div key={d} className="w-[14px] h-[14px] border border-[#dcdcdc]">
              <svg width="12" height="12" viewBox="0 0 14 12"><path d={d} fill="none" stroke="#7a8a9a" strokeWidth="1.500" /></svg>
            </div>
          ))}
        </div>
      </div>
      <ToolBarOne />
      <ToolBarTwo />
      <div className="h-[551px] shrink-0 flex">
        <Sidebar />
        <div className="flex-1 min-w-0 overflow-hidden flex flex-col">
          <ViewBar />
          <Drawing />
        </div>
      </div>
      <div className="h-[22px] shrink-0 bg-[#f0f0f0] border-t border-b border-[#c8c8c8] border-b-[#8c8c8c] flex items-center text-[12px] text-[#222]">
        <span className="w-[544px] pl-[5px]">ﾚﾃﾞｨ</span>
        <span className="w-[262px] [font-feature-settings:'palt'] tracking-[-1px]">サンプル</span>
        <span className="border-l border-[#d0d0d0] pl-[4px] flex-1 leading-[18px] tracking-[-0.750px]">C:¥UsrData¥Ss7Data¥sample001</span>
      </div>
      <Dialog />
    </div>
  );
}
